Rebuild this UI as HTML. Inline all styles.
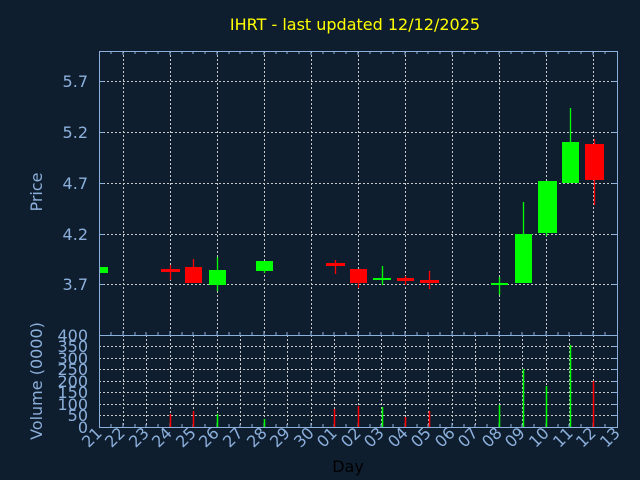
<!DOCTYPE html>
<html><head><meta charset="utf-8"><style>
html,body{margin:0;padding:0;background:#0f1e2f;}
svg{display:block;font-family:"DejaVu Sans","Liberation Sans",sans-serif;}
</style></head><body>
<svg width="640" height="480" viewBox="0 0 640 480" xmlns="http://www.w3.org/2000/svg">
<rect width="640" height="480" fill="#0f1e2f"/>
<text x="355" y="30" fill="#ffff00" font-size="16" text-anchor="middle">IHRT - last updated 12/12/2025</text>
<g stroke="#c8c8c8" stroke-width="1" stroke-dasharray="2,2">
<path d="M99 81.5H617M99 132.5H617M99 183.5H617M99 234.5H617M99 284.5H617"/>
<path d="M123.5 51V335M170.5 51V335M217.5 51V335M264.5 51V335M311.5 51V335M358.5 51V335M405.5 51V335M452.5 51V335M499.5 51V335M546.5 51V335M593.5 51V335"/>
<path d="M99 346.5H617M99 358.5H617M99 369.5H617M99 381.5H617M99 392.5H617M99 404.5H617M99 415.5H617"/>
<path d="M123.5 335V427M146.5 335V427M170.5 335V427M193.5 335V427M217.5 335V427M240.5 335V427M264.5 335V427M287.5 335V427M311.5 335V427M334.5 335V427M358.5 335V427M381.5 335V427M405.5 335V427M428.5 335V427M452.5 335V427M475.5 335V427M499.5 335V427M522.5 335V427M546.5 335V427M569.5 335V427M593.5 335V427"/>
</g>
<g stroke="#8cb0dc" stroke-width="1" fill="none">
<rect x="99.5" y="51.5" width="518" height="376"/>
<path d="M99 335.5H617"/>
<path d="M111 51v3M123 51v4M135 51v3M146 51v3M158 51v3M170 51v4M182 51v3M193 51v3M205 51v3M217 51v4M229 51v3M240 51v3M252 51v3M264 51v4M276 51v3M287 51v3M299 51v3M311 51v4M323 51v3M334 51v3M346 51v3M358 51v4M370 51v3M381 51v3M393 51v3M405 51v4M417 51v3M428 51v3M440 51v3M452 51v4M464 51v3M475 51v3M487 51v3M499 51v4M511 51v3M522 51v3M534 51v3M546 51v4M558 51v3M569 51v3M581 51v3M593 51v4M605 51v3"/>
<path d="M111 335v-3M123 335v-4M135 335v-3M146 335v-3M158 335v-3M170 335v-4M182 335v-3M193 335v-3M205 335v-3M217 335v-4M229 335v-3M240 335v-3M252 335v-3M264 335v-4M276 335v-3M287 335v-3M299 335v-3M311 335v-4M323 335v-3M334 335v-3M346 335v-3M358 335v-4M370 335v-3M381 335v-3M393 335v-3M405 335v-4M417 335v-3M428 335v-3M440 335v-3M452 335v-4M464 335v-3M475 335v-3M487 335v-3M499 335v-4M511 335v-3M522 335v-3M534 335v-3M546 335v-4M558 335v-3M569 335v-3M581 335v-3M593 335v-4M605 335v-3"/>
<path d="M111 427v-3M123 427v-4M135 427v-3M146 427v-3M158 427v-3M170 427v-4M182 427v-3M193 427v-3M205 427v-3M217 427v-4M229 427v-3M240 427v-3M252 427v-3M264 427v-4M276 427v-3M287 427v-3M299 427v-3M311 427v-4M323 427v-3M334 427v-3M346 427v-3M358 427v-4M370 427v-3M381 427v-3M393 427v-3M405 427v-4M417 427v-3M428 427v-3M440 427v-3M452 427v-4M464 427v-3M475 427v-3M487 427v-3M499 427v-4M511 427v-3M522 427v-3M534 427v-3M546 427v-4M558 427v-3M569 427v-3M581 427v-3M593 427v-4M605 427v-3"/>
<path d="M99 81.5h5M99 132.5h5M99 183.5h5M99 234.5h5M99 284.5h5M617 81.5h-5M617 132.5h-5M617 183.5h-5M617 234.5h-5M617 284.5h-5"/>
<path d="M617 346.5h-5M617 358.5h-5M617 369.5h-5M617 381.5h-5M617 392.5h-5M617 404.5h-5M617 415.5h-5"/>
</g>
<g fill="#8cb0dc" font-size="16" text-anchor="end">
<text x="88" y="87">5.7</text><text x="88" y="138">5.2</text><text x="88" y="189">4.7</text><text x="88" y="240">4.2</text><text x="88" y="290">3.7</text>
</g>
<g fill="#8cb0dc" font-size="16" text-anchor="end">
<text x="88" y="341">400</text><text x="88" y="352">350</text><text x="88" y="364">300</text><text x="88" y="375">250</text><text x="88" y="387">200</text><text x="88" y="398">150</text><text x="88" y="410">100</text><text x="88" y="421">50</text><text x="88" y="433">0</text>
</g>
<text transform="translate(42,192) rotate(-90)" fill="#8cb0dc" font-size="16" text-anchor="middle">Price</text>
<text transform="translate(42,381) rotate(-90)" fill="#8cb0dc" font-size="16" text-anchor="middle">Volume (0000)</text>
<text x="348" y="472" fill="#000000" font-size="16" text-anchor="middle">Day</text>
<g fill="#8cb0dc" font-size="16" text-anchor="end">
<text transform="translate(103,434) rotate(-45)">21</text>
<text transform="translate(126,434) rotate(-45)">22</text>
<text transform="translate(150,434) rotate(-45)">23</text>
<text transform="translate(173,434) rotate(-45)">24</text>
<text transform="translate(197,434) rotate(-45)">25</text>
<text transform="translate(220,434) rotate(-45)">26</text>
<text transform="translate(244,434) rotate(-45)">27</text>
<text transform="translate(268,434) rotate(-45)">28</text>
<text transform="translate(291,434) rotate(-45)">29</text>
<text transform="translate(315,434) rotate(-45)">30</text>
<text transform="translate(338,434) rotate(-45)">01</text>
<text transform="translate(362,434) rotate(-45)">02</text>
<text transform="translate(385,434) rotate(-45)">03</text>
<text transform="translate(409,434) rotate(-45)">04</text>
<text transform="translate(432,434) rotate(-45)">05</text>
<text transform="translate(456,434) rotate(-45)">06</text>
<text transform="translate(479,434) rotate(-45)">07</text>
<text transform="translate(503,434) rotate(-45)">08</text>
<text transform="translate(526,434) rotate(-45)">09</text>
<text transform="translate(550,434) rotate(-45)">10</text>
<text transform="translate(574,434) rotate(-45)">11</text>
<text transform="translate(597,434) rotate(-45)">12</text>
<text transform="translate(621,434) rotate(-45)">13</text>
</g>
<!-- wicks -->
<g stroke-width="1.3">
<path stroke="#ff0000" d="M170.5 265V280M193.5 259V283M335.5 260V274M358.5 283V288M405.5 276V285M429.5 271V289M594.5 139V205"/>
<path stroke="#00ff00" d="M217.5 257V291M264.5 271V273M382.5 266V285M499.5 277V295M523.5 202V234M570.5 108V142M546.5 233V236"/>
</g>
<!-- bodies -->
<g fill="#00ff00">
<rect x="100" y="267" width="8" height="6"/>
<rect x="209" y="270" width="17" height="15"/>
<rect x="256" y="261" width="17" height="10"/>
<rect x="373" y="278" width="18" height="2"/>
<rect x="491" y="283" width="17" height="2"/>
<rect x="515" y="234" width="17" height="49"/>
<rect x="538" y="181" width="19" height="52"/>
<rect x="562" y="142" width="17" height="41"/>
</g>
<g fill="#ff0000">
<rect x="161" y="269" width="19" height="3"/>
<rect x="185" y="267" width="17" height="16"/>
<rect x="326" y="263" width="19" height="3"/>
<rect x="350" y="269" width="17" height="14"/>
<rect x="397" y="278" width="17" height="3"/>
<rect x="420" y="280" width="19" height="3"/>
<rect x="585" y="144" width="19" height="36"/>
</g>
<!-- volume -->
<g stroke-width="1.5">
<path stroke="#ff0000" d="M170.5 414V427M193.5 411V427M334.5 409V427M358.5 406V427M405.5 417V427M429.5 411V427M593.5 381V427"/>
<path stroke="#00ff00" d="M217.5 414V427M264.5 419V427M382.5 407V427M499.5 405V427M523.5 369V427M546.5 386V427M570.5 345V427"/>
</g>
</svg>
</body></html>
